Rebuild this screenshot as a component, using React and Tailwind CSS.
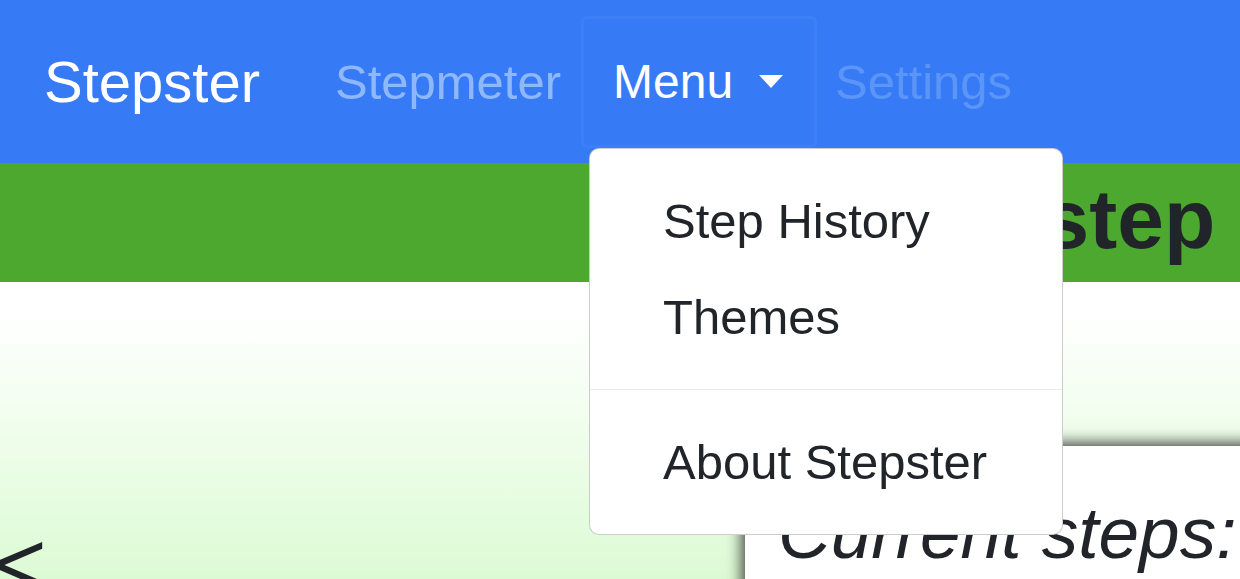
import React from 'react';

const font = { fontFamily: '"Liberation Sans", Arial, sans-serif' };

function Navbar() {
  return (
    <nav className="flex h-[163px] items-center bg-[#367bf5] pl-[44px]">
      <span className="text-[58px] leading-none text-white">Stepster</span>
      <a className="ml-[75px] text-[49px] leading-[72px] text-[#8fb8fa]">Stepmeter</a>
      <button
        type="button"
        className="ml-[20px] flex h-[132px] w-[236px] items-center rounded-[6px] border-[3px] border-white/[0.04] pl-[29px] text-white"
      >
        <span className="text-[48px] leading-[72px]">Menu</span>
        <span className="ml-[26px] h-0 w-0 border-x-[12px] border-t-[13px] border-x-transparent border-t-white" />
      </button>
      <a className="ml-[18px] text-[49px] leading-[72px] text-[#5b95f7]">Settings</a>
    </nav>
  );
}

function DropdownMenu() {
  const items = ['Step History', 'Themes'];
  return (
    <div className="absolute left-[589px] top-[148px] w-[474px] rounded-[10px] border border-black/20 bg-white py-[24px] text-[#212529]">
      {items.map((item) => (
        <div key={item} className="px-[73px] py-[12px] text-[49px] leading-[72px]">
          {item}
        </div>
      ))}
      <div className="my-[24px] h-px bg-[#e9ecef]" />
      <div className="px-[73px] py-[12px] text-[49px] leading-[72px]">About Stepster</div>
    </div>
  );
}

export default function App() {
  return (
    <div className="relative h-[579px] w-[1240px] overflow-hidden bg-white" style={font}>
      <Navbar />
      <div className="h-[119px] overflow-hidden whitespace-nowrap bg-[#4ca82f] pl-[764px] pt-[14px]">
        <h3 className="text-[84px] font-bold leading-none text-[#212529]">Take a step forward</h3>
      </div>
      <div className="flex h-[297px] bg-gradient-to-b from-white from-[10%] to-[#dcfbd4] pt-[164px]">
        <div className="w-[745px] shrink-0 pt-[73px]">
          <span className="-ml-[6px] block text-[90px] leading-none text-[#212529]">&lt;</span>
        </div>
        <div className="h-[300px] w-[520px] shrink-0 bg-white pl-[33px] pt-[50px] shadow-[0_0_14px_3px_rgba(0,0,0,0.75)]">
          <p className="whitespace-nowrap text-[73px] italic leading-none text-[#212529]">Current steps:</p>
        </div>
      </div>
      <DropdownMenu />
    </div>
  );
}
